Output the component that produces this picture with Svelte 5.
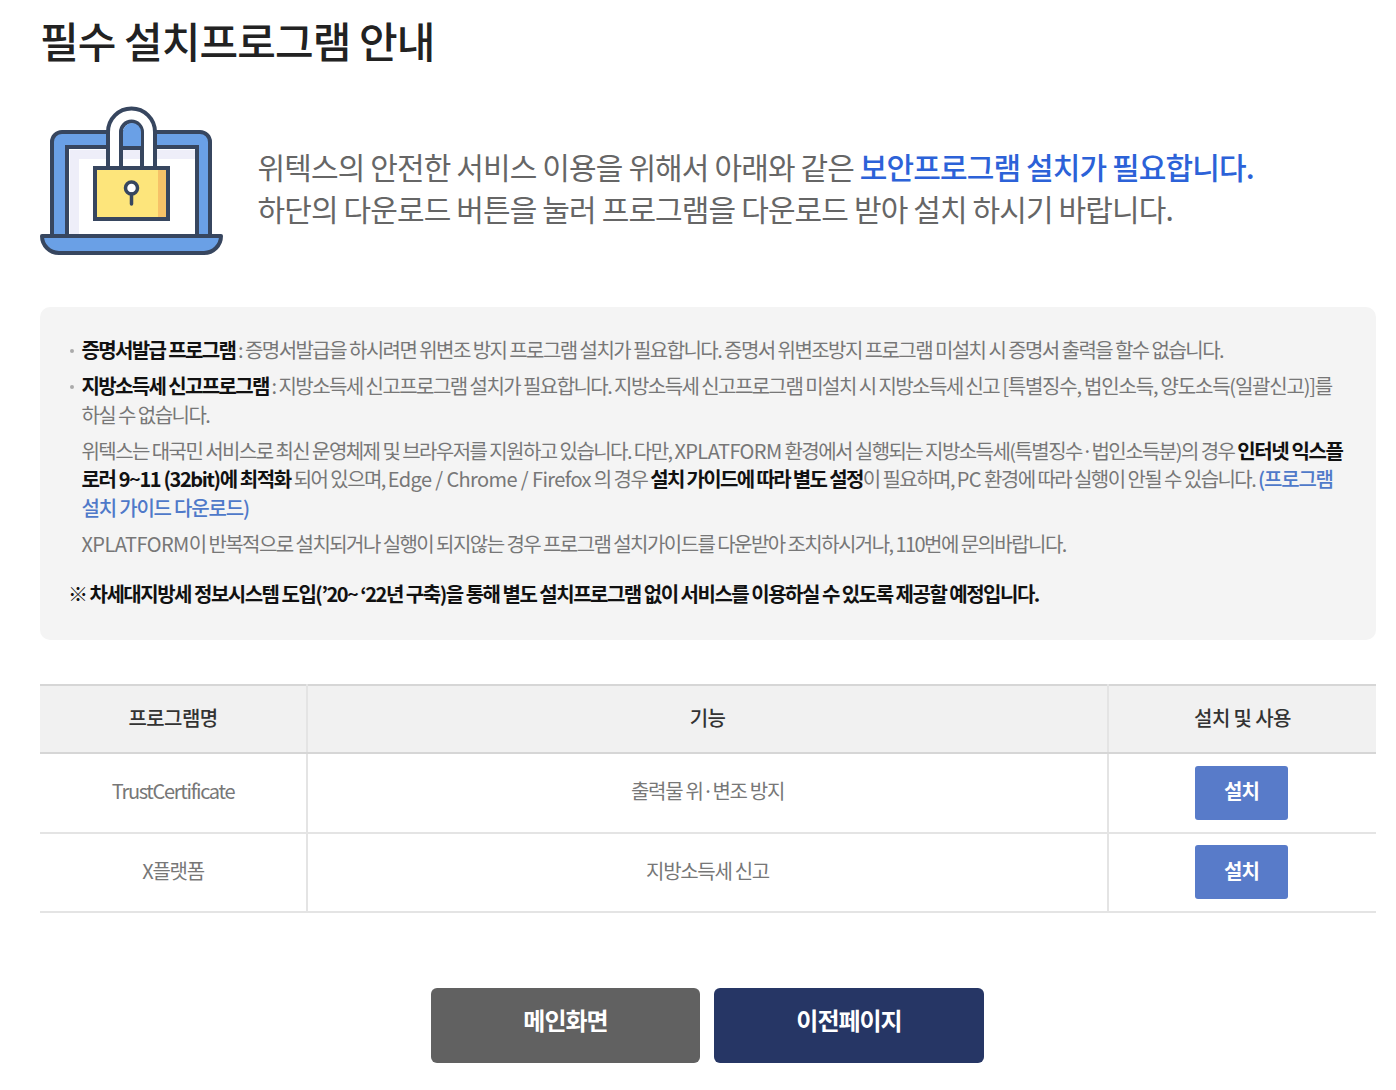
<script>
  const rows = [
    { name: 'TrustCertificate', fn: '출력물 위·변조 방지' },
    { name: 'X플랫폼', fn: '지방소득세 신고' }
  ];
</script>

<div class="page">
  <h1>필수 설치프로그램 안내</h1>

  <section class="intro">
    <svg class="lock" viewBox="0 0 184 152" width="184" height="152" aria-hidden="true">
      <path d="M12 132V38a10 10 0 0 1 10-10h138a10 10 0 0 1 10 10v94z" fill="#6aa0e6" stroke="#37465f" stroke-width="4"/>
      <rect x="27" y="43" width="130" height="90" fill="#fff" stroke="#37465f" stroke-width="4"/>
      <rect x="30" y="46" width="9" height="85" fill="#eeeef9"/>
      <rect x="30" y="46" width="125" height="9" fill="#eeeef9"/>
      <path d="M2 132h179a17 17 0 0 1-17 17H19A17 17 0 0 1 2 132z" fill="#6aa0e6" stroke="#37465f" stroke-width="4" stroke-linejoin="round"/>
      <path d="M68 64V28a23.500 23.500 0 0 1 47 0v36h-13V28a10.500 10.500 0 0 0-21 0v36z" fill="#fff" stroke="#37465f" stroke-width="4"/>
      <path d="M83 43V28a9 9 0 0 1 18 0v15z" fill="#6aa0e6"/>
      <path d="M81 44h21" stroke="#37465f" stroke-width="4"/>
      <rect x="55" y="64" width="73" height="51" fill="#fde57b"/>
      <rect x="118" y="64" width="10" height="51" fill="#f6c268"/>
      <rect x="55" y="64" width="73" height="51" fill="none" stroke="#37465f" stroke-width="4"/>
      <circle cx="91.500" cy="84" r="6" fill="#fff" stroke="#37465f" stroke-width="3.500"/>
      <path d="M91.500 90v10" stroke="#37465f" stroke-width="3.500" stroke-linecap="round"/>
    </svg>
    <p>
      위텍스의 안전한 서비스 이용을 위해서 아래와 같은 <strong>보안프로그램 설치가 필요합니다.</strong><br />
      하단의 다운로드 버튼을 눌러 프로그램을 다운로드 받아 설치 하시기 바랍니다.
    </p>
  </section>

  <section class="notice">
    <ul>
      <li class="bullet"><b>증명서발급 프로그램</b> : 증명서발급을 하시려면 위변조 방지 프로그램 설치가 필요합니다. 증명서 위변조방지 프로그램 미설치 시 증명서 출력을 할수 없습니다.</li>
      <li class="bullet"><b>지방소득세 신고프로그램</b> : 지방소득세 신고프로그램 설치가 필요합니다. 지방소득세 신고프로그램 미설치 시 지방소득세 신고 <span class="wide">[특별징수, 법인소득, 양도소득(일괄신고)]</span>를<br />하실 수 없습니다.</li>
      <li>위텍스는 대국민 서비스로 최신 운영체제 및 브라우저를 지원하고 있습니다. 다만, <span class="latin">XPLATFORM</span> 환경에서 실행되는 지방소득세(특별징수·법인소득분)의 경우 <b class="tail">인터넷 익스플<br />로러 9~11 (32bit)에 최적화</b> 되어 있으며, <span class="latin">Edge / Chrome / Firefox</span> 의 경우 <b>설치 가이드에 따라 별도 설정</b>이 필요하며, <span class="latin">PC</span> 환경에 따라 실행이 안될 수 있습니다. <a href="#guide">(프로그램<br />설치 가이드 다운로드)</a></li>
      <li><span class="latin">XPLATFORM</span>이 반복적으로 설치되거나 실행이 되지않는 경우 프로그램 설치가이드를 다운받아 조치하시거나, 110번에 문의바랍니다.</li>
    </ul>
    <p class="note">※ 차세대지방세 정보시스템 도입(’20~ ‘22년 구축)을 통해 별도 설치프로그램 없이 서비스를 이용하실 수 있도록 제공할 예정입니다.</p>
  </section>

  <table>
    <thead>
      <tr><th class="c1">프로그램명</th><th class="c2">기능</th><th class="c3">설치 및 사용</th></tr>
    </thead>
    <tbody>
      {#each rows as row}
        <tr>
          <td class="text">{row.name}</td>
          <td class="text">{row.fn}</td>
          <td class="act"><button class="install">설치</button></td>
        </tr>
      {/each}
    </tbody>
  </table>

  <div class="actions">
    <button class="big gray">메인화면</button>
    <button class="big navy">이전페이지</button>
  </div>
</div>

<style>
  :global(body) {
    margin: 0;
    background: #fff;
  }
  .page {
    box-sizing: border-box;
    width: 1396px;
    height: 1090px;
    padding: 10px 20px 0 40px;
    font-family: "Noto Sans CJK KR", "Noto Sans", sans-serif;
    color: #777;
    overflow: hidden;
  }
  h1 {
    margin: 0;
    font-size: 42px;
    line-height: 60px;
    font-weight: 500;
    letter-spacing: -0.9px;
    color: #222;
  }
  .intro {
    display: flex;
    align-items: flex-start;
    height: 203px;
    margin-top: 34px;
  }
  .lock {
    flex: none;
  }
  .intro p {
    margin: 41px 0 0 33.500px;
    font-size: 30px;
    line-height: 42px;
    font-weight: 400;
    letter-spacing: -0.87px;
    color: #666;
    white-space: nowrap;
  }
  .intro strong {
    font-weight: 500;
    color: #2c62d8;
  }
  .notice {
    box-sizing: border-box;
    height: 333px;
    padding: 29px 30px 0 30px;
    background: #f4f4f4;
    border-radius: 10px;
    font-size: 20px;
    line-height: 28.500px;
    letter-spacing: -1.56px;
  }
  ul {
    margin: 0;
    padding: 0;
    list-style: none;
  }
  li {
    position: relative;
    padding-left: 11.500px;
    margin-bottom: 7.500px;
  }
  .bullet::before {
    content: "";
    position: absolute;
    left: 0;
    top: 13px;
    width: 4px;
    height: 4px;
    border-radius: 50%;
    background: #aaa;
  }
  .latin {
    letter-spacing: -0.6px;
  }
  .wide {
    letter-spacing: -1.2px;
  }
  b {
    font-weight: 700;
    color: #111;
    letter-spacing: -1.65px;
  }
  b.tail {
    letter-spacing: -1.4px;
  }
  a {
    color: #4f79c9;
    font-weight: 500;
    letter-spacing: -1.2px;
    text-decoration: none;
  }
  .note {
    margin: 22px 0 0 -2px;
    font-weight: 700;
    color: #111;
    letter-spacing: -1.500px;
  }
  table {
    width: 1336px;
    margin-top: 44px;
    border-collapse: collapse;
    table-layout: fixed;
    border-top: 2px solid #d6d6d6;
  }
  th {
    box-sizing: border-box;
    height: 68px;
    padding: 0 0 4px;
    background: #f1f1f1;
    border-bottom: 2px solid #d6d6d6;
    font-size: 20px;
    font-weight: 500;
    letter-spacing: -0.6px;
    color: #333;
  }
  th + th, td + td {
    border-left: 2px solid #e4e4e4;
  }
  .c1 { width: 267px; }
  .c3 { width: 268px; }
  td {
    box-sizing: border-box;
    height: 79.500px;
    padding: 0;
    border-bottom: 2px solid #e4e4e4;
    text-align: center;
    font-size: 20px;
    letter-spacing: -1.3px;
    color: #777;
  }
  td.text {
    padding-bottom: 4px;
  }
  td.act {
    padding-right: 2px;
  }
  button {
    font-family: inherit;
    border: none;
    color: #fff;
    padding: 0;
  }
  .install {
    width: 93px;
    height: 54px;
    padding-bottom: 4px;
    border-radius: 3px;
    background: #587bc9;
    font-size: 20px;
    font-weight: 700;
    letter-spacing: -1px;
    display: block;
    margin: 0 auto;
  }
  .actions {
    display: flex;
    justify-content: center;
    gap: 14px;
    margin-top: 75px;
    padding-right: 1px;
  }
  .big {
    width: 270px;
    height: 75px;
    padding-bottom: 12px;
    border-radius: 6px;
    font-size: 24px;
    font-weight: 700;
    letter-spacing: -1px;
  }
  .gray {
    width: 269px;
    background: #616161;
  }
  .navy { background: #263665; }
</style>
